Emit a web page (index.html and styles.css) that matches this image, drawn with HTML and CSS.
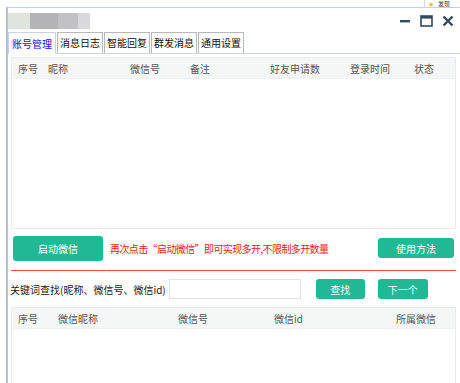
FILE: index.html
```html
<!DOCTYPE html>
<html>
<head>
<meta charset="utf-8">
<link rel="stylesheet" href="styles.css">
</head>
<body>
<div class="behind"><span class="star">★</span><span class="behind-text">发现</span></div>
<div class="window">
  <div class="titlebar">
    <div class="logo"><span class="l1"></span><span class="l2"></span><span class="l3"></span><span class="l4"></span></div>
    <div class="controls">
      <svg class="ctl" width="12" height="12" viewBox="0 0 12 12"><rect x="1" y="5" width="10" height="2.4" fill="#34495e"/></svg>
      <svg class="ctl" width="13" height="12" viewBox="0 0 13 12"><rect x="1" y="1" width="11" height="10" fill="none" stroke="#34495e" stroke-width="1.6"/><rect x="1" y="1" width="11" height="2.6" fill="#34495e"/></svg>
      <svg class="ctl" width="12" height="12" viewBox="0 0 12 12"><path d="M1.5 1.5 L10.5 10.5 M10.5 1.5 L1.5 10.5" stroke="#34495e" stroke-width="2.4"/></svg>
    </div>
  </div>
  <div class="tabs">
    <div class="tab active">账号管理</div>
    <div class="tab">消息日志</div>
    <div class="tab">智能回复</div>
    <div class="tab">群发消息</div>
    <div class="tab">通用设置</div>
  </div>
  <div class="panel">
    <div class="grid upper">
      <div class="ghead">
        <span class="c-no">序号</span>
        <span class="c-nick">昵称</span>
        <span class="c-wx">微信号</span>
        <span class="c-note">备注</span>
        <span class="c-req">好友申请数</span>
        <span class="c-time">登录时间</span>
        <span class="c-stat">状态</span>
      </div>
    </div>
    <div class="actions">
      <button class="btn btn-start">启动微信</button>
      <span class="hint">再次点击“启动微信”即可实现多开,不限制多开数量</span>
      <button class="btn btn-help">使用方法</button>
    </div>
    <div class="redline"></div>
    <div class="search">
      <span class="label">关键词查找(昵称、微信号、微信id)</span>
      <input class="input" type="text">
      <button class="btn btn-find">查找</button>
      <button class="btn btn-next">下一个</button>
    </div>
    <div class="grid lower">
      <div class="ghead">
        <span class="d-no">序号</span>
        <span class="d-nick">微信昵称</span>
        <span class="d-wx">微信号</span>
        <span class="d-id">微信id</span>
        <span class="d-own">所属微信</span>
      </div>
    </div>
  </div>
</div>
</body>
</html>
```
FILE: styles.css
```css
* { box-sizing: border-box; }
html, body { margin: 0; padding: 0; }
body {
  width: 460px;
  height: 383px;
  overflow: hidden;
  background: #fff;
  font-family: "Noto Sans CJK SC", "Noto Sans", sans-serif;
  font-size: 10px;
  color: #222;
  position: relative;
}
.behind {
  position: absolute;
  left: 424px;
  top: 0;
  width: 40px;
  height: 7px;
  border-left: 1px solid #d8d8d8;
  overflow: hidden;
  font-size: 6px;
  line-height: 7px;
  white-space: nowrap;
}
.star { color: #f0b43c; margin-left: 3px; }
.behind-text { color: #333; margin-left: 4px; }
.window {
  margin-left: 6px;
  margin-top: 7px;
  border-left: 2px solid #b7c1cb;
  border-top: 1px solid #c8cfd6;
  height: 376px;
  display: flex;
  flex-direction: column;
}
.titlebar {
  height: 24px;
  display: flex;
  align-items: center;
  justify-content: space-between;
  padding-top: 2px;
}
.logo { display: flex; height: 16px; }
.logo span { display: block; height: 16px; }
.l1 { width: 22px; background: #dfe5dc; }
.l2 { width: 28px; background: #b4b4b6; }
.l3 { width: 20px; background: #c2c2c4; }
.l4 { width: 12px; background: #dadadc; }
.controls { display: flex; align-items: center; gap: 9px; margin-right: 6px; }
.ctl { display: block; }
.tabs {
  display: flex;
  height: 22px;
  align-items: flex-end;
  border-bottom: 1px solid #cfd6dc;
}
.tab {
  height: 21px;
  line-height: 19px;
  padding: 0 2px;
  border: 1px solid #b8b8b8;
  border-bottom: none;
  margin-right: 1px;
  color: #111;
  background: #fff;
}
.tab.active {
  height: 22px;
  color: #1010ee;
  border-color: #c8d4e4;
  line-height: 21px;
  padding: 0 3px;
  margin-bottom: -1px;
  border-bottom: 1px solid #fff;
}
.panel {
  flex: 1;
  display: flex;
  flex-direction: column;
  padding: 3px 4px 0 3px;
}
.grid {
  border: 1px solid #e8ecef;
  background: #fff;
}
.upper { height: 172px; }
.ghead {
  height: 21px;
  background: #f5f7f7;
  border-bottom: 1px solid #eef1f2;
  color: #555;
  position: relative;
}
.ghead span { position: absolute; top: 2px; line-height: 17px; }
.c-no { left: 6px; }
.c-nick { left: 36px; }
.c-wx { left: 118px; }
.c-note { left: 178px; }
.c-req { left: 258px; }
.c-time { left: 338px; }
.c-stat { left: 402px; }
.actions {
  display: flex;
  align-items: center;
  height: 38px;
  padding-left: 2px;
}
.btn {
  font-family: "Noto Sans CJK SC", "Noto Sans", sans-serif;
  font-size: 10px;
  color: #fff;
  background: #1fba94;
  border: none;
  border-radius: 3px;
  padding: 0;
}
.btn-start { width: 90px; height: 25px; }
.hint { color: #f01818; margin-left: 7px; flex: 1; letter-spacing: -0.6px; }
.btn-help { width: 76px; height: 20px; margin-right: 2px; }
.redline {
  height: 1px;
  background: #f04a4a;
  width: 445px;
  margin-top: 3px;
}
.search {
  display: flex;
  align-items: center;
  height: 36px;
}
.label { color: #222; margin-left: -1px; }
.input {
  width: 132px;
  height: 20px;
  border: 1px solid #e2e2e2;
  margin-left: 3px;
  padding: 0;
}
.btn-find { width: 49px; height: 20px; margin-left: 15px; }
.btn-next { width: 50px; height: 20px; margin-left: 13px; }
.lower { flex: 1; width: 445px; border-bottom: none; }
.d-no { left: 6px; }
.d-nick { left: 46px; }
.d-wx { left: 166px; }
.d-id { left: 262px; }
.d-own { left: 384px; }
```
